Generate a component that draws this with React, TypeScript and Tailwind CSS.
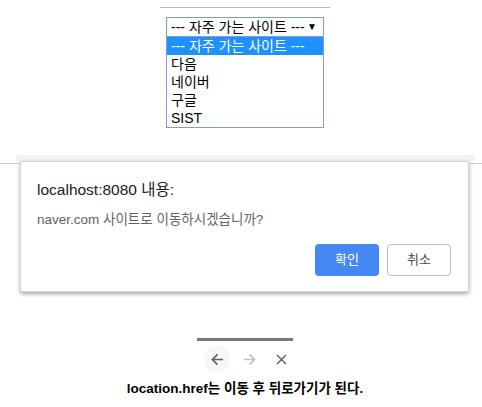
const sans = "font-['Liberation_Sans','Noto_Sans_CJK_KR',sans-serif]";

const sites = ["다음", "네이버", "구글", "SIST"];

function ArrowLeft({ className }: { className?: string }) {
  return (
    <svg viewBox="0 0 16 16" className={className} fill="none" stroke="currentColor" strokeWidth="1.8">
      <path d="M14 8H2.5M8 2.5 2.5 8 8 13.5" />
    </svg>
  );
}

function ArrowRight({ className }: { className?: string }) {
  return (
    <svg viewBox="0 0 16 16" className={className} fill="none" stroke="currentColor" strokeWidth="1.8">
      <path d="M2 8h11.5M8 2.5 13.5 8 8 13.5" />
    </svg>
  );
}

function Close({ className }: { className?: string }) {
  return (
    <svg viewBox="0 0 16 16" className={className} fill="none" stroke="currentColor" strokeWidth="1.8">
      <path d="M2.5 2.5l11 11M13.5 2.5l-11 11" />
    </svg>
  );
}

export default function App() {
  return (
    <div className={`relative h-[407px] w-[482px] overflow-hidden bg-white ${sans}`}>
      {/* select area */}
      <div className="flex flex-col items-center pl-2 pt-[7px]">
        <div className="h-px w-[170px] bg-[#b9b9b9]" />
        <div className="mt-[9px] flex h-[20px] w-[158px] items-center justify-between border border-[#7d9ccd] pl-[4px] pr-[6px] text-[14px] leading-none text-black">
          <span>--- 자주 가는 사이트 ---</span>
          <span className="text-[10px]">▼</span>
        </div>
        <div className="-mt-px w-[158px] border border-[#7f9dd0] text-[14px] leading-[18px] text-black">
          <div className="bg-[#1e90ff] px-[4px] text-white">--- 자주 가는 사이트 ---</div>
          {sites.map((s) => (
            <div key={s} className="px-[4px]">
              {s}
            </div>
          ))}
        </div>
      </div>

      {/* page behind the dialog */}
      <div className="mt-[27px] ml-[16px] h-[7px] w-[458px] bg-[#f1f3f4]" />
      <div className="mt-[1px] h-px w-full bg-[#c9c9c9]" />

      {/* bottom nav */}
      <div className="mt-[174px] flex flex-col items-center pl-2">
        <div className="h-[3px] w-[96px] bg-[#777777]" />
        <div className="ml-[8px] mt-[5px] flex items-center gap-[6px]">
          <div className="flex h-[26px] w-[26px] items-center justify-center rounded-full bg-[#f7f7f7] text-[#5f6368]">
            <ArrowLeft className="h-[15px] w-[15px]" />
          </div>
          <div className="flex h-[26px] w-[26px] items-center justify-center text-[#bdc1c6]">
            <ArrowRight className="h-[15px] w-[15px]" />
          </div>
          <div className="flex h-[26px] w-[26px] items-center justify-center text-[#5f6368]">
            <Close className="h-[13px] w-[13px]" />
          </div>
        </div>
        <p className="mt-[7px] text-[13.5px] font-bold text-black">location.href는 이동 후 뒤로가기가 된다.</p>
      </div>

      {/* alert dialog */}
      <div className="absolute left-[20px] top-[161px] h-[131px] w-[449px] rounded-[2px] border border-[#d4d4d4] bg-white px-[16px] shadow-[0_2px_4px_rgba(0,0,0,0.35)]">
        <p className="mt-[18px] text-[15.5px] leading-[20px] text-[#202124]">localhost:8080 내용:</p>
        <p className="mt-[12px] text-[13.5px] leading-[16px] text-[#5f6368]">naver.com 사이트로 이동하시겠습니까?</p>
        <div className="mt-[16px] flex justify-end gap-[8px] pr-[1px]">
          <button className="h-[32px] w-[64px] rounded-[4px] bg-[#4587f3] text-[13px] text-white">확인</button>
          <button className="h-[32px] w-[64px] rounded-[4px] border border-[#bcbcbc] bg-white text-[13px] text-[#4a4a4a]">취소</button>
        </div>
      </div>
    </div>
  );
}
